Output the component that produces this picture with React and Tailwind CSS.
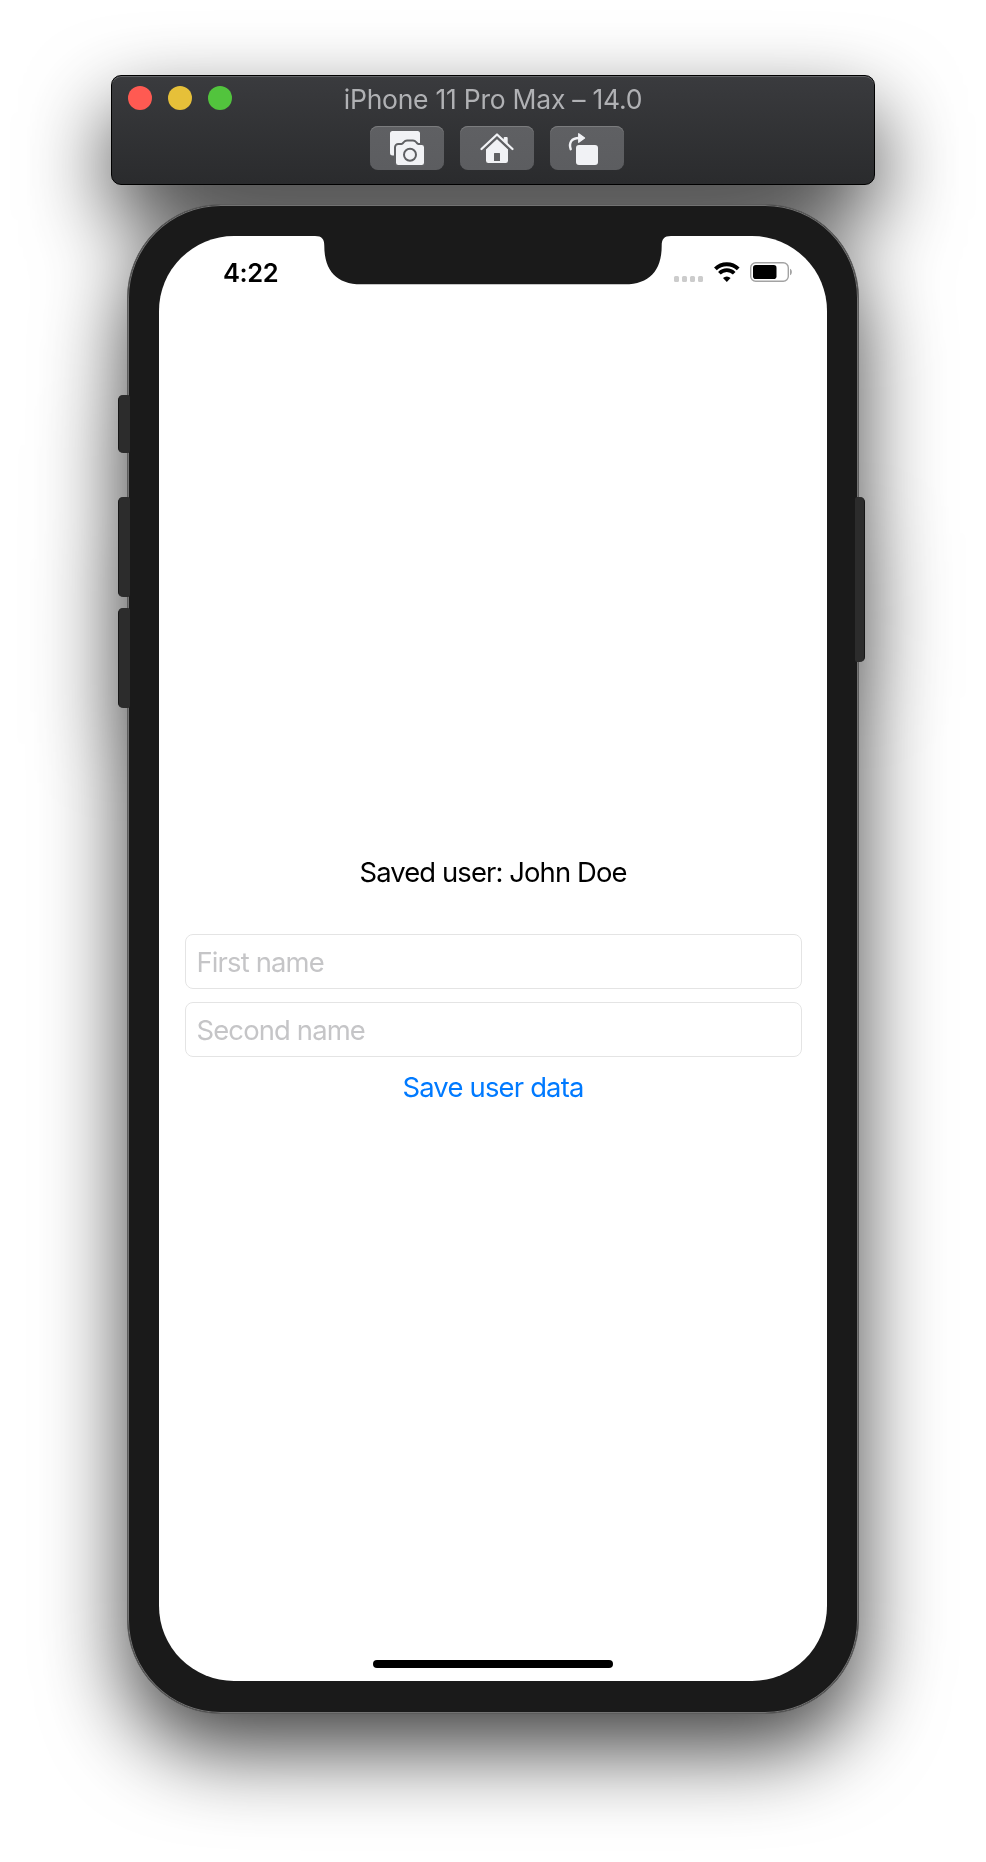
function CameraIcon() {
  return (
    <svg width="74" height="44" viewBox="0 0 74 44">
      <rect x="20" y="5" width="30" height="24.5" rx="2.5" fill="#f1f2f5" />
      <path
        d="M28.3 19H31.5C33.6 19 34.6 15.5 37 15.5H43C45.4 15.5 46.4 19 48.5 19H51.7A2.3 2.3 0 0 1 54 21.3V36.7A2.3 2.3 0 0 1 51.7 39H28.3A2.3 2.3 0 0 1 26 36.7V21.3A2.3 2.3 0 0 1 28.3 19Z"
        fill="#f1f2f5"
        stroke="#5f6063"
        strokeWidth="4"
        paintOrder="stroke"
      />
      <circle cx="40" cy="28.7" r="6" fill="none" stroke="#5f6063" strokeWidth="2" />
    </svg>
  );
}

function HomeIcon() {
  return (
    <svg width="74" height="44" viewBox="0 0 74 44">
      <path d="M37 12.5L48 22.8V34.7A2.3 2.3 0 0 1 45.7 37H28.3A2.3 2.3 0 0 1 26 34.700V22.8Z" fill="#f1f2f5" />
      <path d="M21.5 23L37 8.5L52.5 23" fill="none" stroke="#5f6063" strokeWidth="5" transform="translate(0 1.2)" />
      <path d="M43.7 12A1 1 0 0 1 44.7 11H46.700A1 1 0 0 1 47.7 12V18.500L43.7 14.700Z" fill="#f1f2f5" />
      <path d="M21.5 23L37 8.5L52.5 23" fill="none" stroke="#f1f2f5" strokeWidth="2.3" strokeLinecap="round" strokeLinejoin="round" />
      <rect x="34" y="27" width="6" height="8" rx="0.5" fill="#5f6063" />
    </svg>
  );
}

function RotateIcon() {
  return (
    <svg width="74" height="44" viewBox="0 0 74 44">
      <rect x="26" y="19" width="22" height="20" rx="3" fill="#f1f2f5" />
      <path d="M20.7 23.2C18.6 16.5 21.5 12 29 12" fill="none" stroke="#f1f2f5" strokeWidth="2.4" strokeLinecap="round" />
      <path d="M28.7 7.7L34.6 12L28.7 16.3Z" fill="#f1f2f5" stroke="#f1f2f5" strokeWidth="1.2" strokeLinejoin="round" />
    </svg>
  );
}

function ToolButton({ label, children }) {
  return (
    <button
      aria-label={label}
      className="h-[44px] w-[74px] overflow-hidden rounded-[8px] bg-linear-to-b from-[#5f6063] to-[#5c5d60] shadow-[inset_0_1px_0_#7b7c7e]"
    >
      {children}
    </button>
  );
}

function TitleBar() {
  return (
    <header className="flex h-[110px] w-[764px] flex-col rounded-[10px] border border-black bg-linear-to-b from-[#3a3b3e] to-[#2a2b2d] shadow-[inset_0_1px_0_#636467]">
      <div className="grid h-[44px] grid-cols-[1fr_auto_1fr] items-center">
        <div className="flex gap-4 pl-4">
          <span className="size-6 rounded-full bg-[#ff5a52]" />
          <span className="size-6 rounded-full bg-[#e6c039]" />
          <span className="size-6 rounded-full bg-[#52c43d]" />
        </div>
        <h1 className="pt-[2px] text-[26.5px] leading-[32px] font-normal tracking-[-0.25px] whitespace-nowrap text-[#b0b1b4]">
          iPhone 11 Pro Max – 14.0
        </h1>
      </div>
      <div className="mt-[6px] flex justify-center gap-4 pl-[8px]">
        <ToolButton label="Screenshot"><CameraIcon /></ToolButton>
        <ToolButton label="Home"><HomeIcon /></ToolButton>
        <ToolButton label="Rotate"><RotateIcon /></ToolButton>
      </div>
    </header>
  );
}

function StatusBar() {
  return (
    <div className="flex h-[72px] items-center justify-between pr-[35px] pl-[64px]">
      <span className="pt-[2px] text-[25.5px] leading-[30px] font-semibold tracking-[-0.4px] text-black">4:22</span>
      <div className="flex items-center">
        <div className="mt-[14px] mr-[11px] flex gap-[2.5px]">
          <span className="size-[5.5px] rounded-[1.5px] bg-[#ccc]" />
          <span className="size-[5.5px] rounded-[1.5px] bg-[#ccc]" />
          <span className="size-[5.5px] rounded-[1.5px] bg-[#ccc]" />
          <span className="size-[5.5px] rounded-[1.5px] bg-[#ccc]" />
        </div>
        <svg width="26" height="20" viewBox="0 0 26 20" className="mr-[10px]">
          <path d="M1.4 6.9A16.2 16.2 0 0 1 24.200 6.9" fill="none" stroke="#000" strokeWidth="3.9" />
          <path d="M5.400 11.300A10.4 10.4 0 0 1 20.200 11.300" fill="none" stroke="#000" strokeWidth="3.7" />
          <path d="M12.8 20L9 16A5.4 5.4 0 0 1 16.600 16Z" fill="#000" />
        </svg>
        <svg width="42" height="20" viewBox="0 0 42 20">
          <rect x="0.7" y="0.7" width="37.6" height="18.6" rx="5" fill="none" stroke="#a3a3a3" strokeWidth="1.4" />
          <rect x="3" y="3" width="23.5" height="14" rx="2.8" fill="#000" />
          <path d="M40 6.7C42.5 7.6 42.5 12.4 40 13.3Z" fill="#a3a3a3" />
        </svg>
      </div>
    </div>
  );
}

function Field({ placeholder }) {
  return (
    <input
      placeholder={placeholder}
      className="block h-[55px] w-full rounded-[8px] border border-[#e4e4e4] bg-white px-[11px] text-[27.4px] tracking-[-0.85px] placeholder:text-[#c5c5c7] placeholder:opacity-100"
    />
  );
}

function Phone() {
  return (
    <section className="relative mt-[19px] h-[1510px] w-[732px] rounded-[94px] border border-[#5c5c5c] bg-[#1a1a1a] px-[31px] pt-[31px] shadow-[inset_0_0_0_1px_#737373]">
      <span className="absolute top-[190px] left-[-10px] h-[58px] w-[12px] rounded-[5px] rounded-r-[2px] border-l border-[#161616] bg-[#2c2c2c]" />
      <span className="absolute top-[292px] left-[-10px] h-[100px] w-[12px] rounded-[5px] rounded-r-[2px] border-l border-[#161616] bg-[#2c2c2c]" />
      <span className="absolute top-[403px] left-[-10px] h-[100px] w-[12px] rounded-[5px] rounded-r-[2px] border-l border-[#161616] bg-[#2c2c2c]" />
      <span className="absolute top-[292px] right-[-7px] h-[165px] w-[10px] rounded-[5px] rounded-l-[2px] border-r border-[#161616] bg-[#2c2c2c]" />
      <div className="relative flex h-[1445px] w-[668px] flex-col overflow-hidden rounded-[75px] bg-white">
        <svg width="356" height="49" viewBox="0 0 356 49" className="absolute top-0 left-[156px]">
          <path
            d="M0 0C7 0 9.3 3 9.3 10C9.3 35 22 48.3 46 48.3H310C334 48.3 346.7 35 346.7 10C346.7 3 349 0 356 0Z"
            fill="#1a1a1a"
          />
        </svg>
        <StatusBar />
        <main className="flex flex-1 flex-col items-center px-[25.5px] pt-[547px]">
          <p className="h-[35px] text-[27.4px] leading-[34px] tracking-[-0.88px] whitespace-nowrap text-black">
            Saved user: John Doe
          </p>
          <div className="mt-[44px] flex w-full flex-col gap-[13px]">
            <Field placeholder="First name" />
            <Field placeholder="Second name" />
          </div>
          <button className="mt-[13px] h-[34px] text-[27.4px] leading-[34px] tracking-[-0.8px] whitespace-nowrap text-[#007aff]">
            Save user data
          </button>
        </main>
        <div className="mb-[13px] h-[8px] w-[240px] self-center rounded-full bg-black" />
      </div>
    </section>
  );
}

export default function App() {
  return (
    <div className="flex h-[1862px] w-[986px] flex-col items-center overflow-hidden bg-white pt-[75px] font-['Inter',sans-serif]">
      <div className="flex flex-col items-center drop-shadow-[0_36px_42px_rgba(0,0,0,0.74)]">
        <TitleBar />
        <Phone />
      </div>
    </div>
  );
}
